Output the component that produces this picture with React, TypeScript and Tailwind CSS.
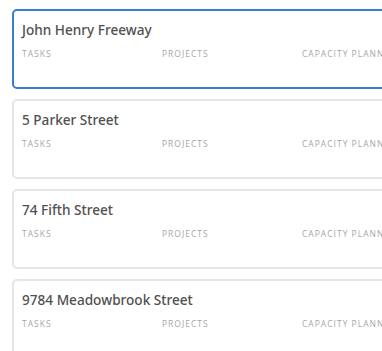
import React from 'react';

const sites = [
  { name: 'John Henry Freeway', active: true },
  { name: '5 Parker Street', active: false },
  { name: '74 Fifth Street', active: false },
  { name: '9784 Meadowbrook Street', active: false },
];

const columns = ['Tasks', 'Projects', 'Capacity Planning'];

export default function App() {
  return (
    <div
      className="h-[351px] w-[382px] overflow-hidden bg-white pl-3 pt-[9px]"
      style={{ fontFamily: '"Open Sans", "Noto Sans", sans-serif' }}
    >
      <div className="flex flex-col gap-[10px]">
        {sites.map((site) => (
          <div
            key={site.name}
            className={`h-[80px] w-[420px] shrink-0 rounded-[5px] border-2 px-2 pt-[10px] ${
              site.active ? 'border-[#3a7bd5]' : 'border-[#e6e6e6]'
            }`}
          >
            <h3
              className="text-[13.6px] font-medium leading-[18px] text-[#505050]"
              style={{ fontFamily: '"Noto Sans", "Open Sans", sans-serif' }}
            >
              {site.name}
            </h3>
            <div className="mt-[9px] grid grid-cols-[140px_140px_140px]">
              {columns.map((col) => (
                <span
                  key={col}
                  className="whitespace-nowrap text-[8.5px] uppercase leading-[12px] tracking-[1px] text-[#a6a6a6]"
                >
                  {col}
                </span>
              ))}
            </div>
          </div>
        ))}
      </div>
    </div>
  );
}
